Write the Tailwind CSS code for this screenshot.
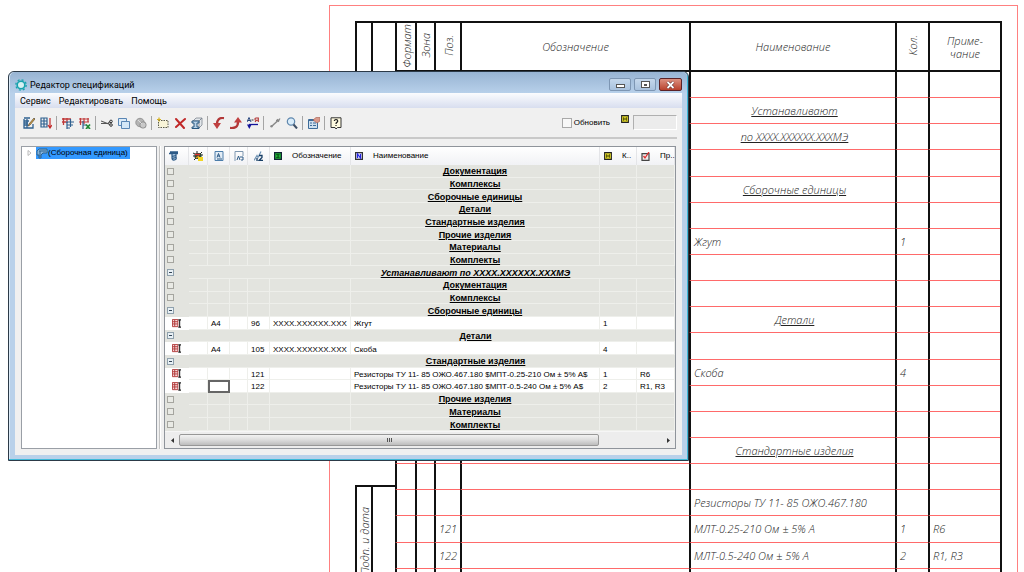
<!DOCTYPE html>
<html lang="ru">
<head>
<meta charset="utf-8">
<title>Редактор спецификаций</title>
<script src="https://cdn.jsdelivr.net/npm/@tailwindcss/browser@4"></script>
</head>
<body class="bg-white">
<svg class="hidden" aria-hidden="true">
  <symbol id="i-edit" viewBox="0 0 12 12"><path d="M1 1h6M1 2v9h9V7M1 4h5M1 6h4M1 8h4M4 2v9" stroke="#2f6190" stroke-width="1.3" fill="none"/><path d="M11 1L6 7l-1 2 2-1 5-6z" fill="#e0a63a" stroke="#333" stroke-width=".6"/></symbol>
  <symbol id="i-sortlist" viewBox="0 0 12 12"><path d="M1 1h6v9H1zM1 4h6M1 7h6M4 1v9" stroke="#2f6190" stroke-width="1.2" fill="none"/><path d="M10 1v9M8 8l2 3 2-3" stroke="#c22a2a" stroke-width="1.2" fill="none"/></symbol>
  <symbol id="i-import" viewBox="0 0 12 12"><path d="M0 2h9M0 5h4M1.500 1v7M5 1v5" stroke="#c03a3a" stroke-width="1.300" fill="none"/><path d="M4 5h8M5 8h6M5 5v7M8.500 2v8M5 11h3" stroke="#2f6190" stroke-width="1.200" fill="none"/></symbol>
  <symbol id="i-excel" viewBox="0 0 12 12"><path d="M0 2h10M0 5h10M1.500 1v7M5 1v6M9 1v4" stroke="#c03a3a" stroke-width="1.200" fill="none"/><path d="M4 4v8M4 8h3" stroke="#2f6190" stroke-width="1.200" fill="none"/><path d="M7 7.500l4 4.500M11 7.500L7 12" stroke="#1f8a35" stroke-width="1.700"/></symbol>
  <symbol id="i-cut" viewBox="0 0 12 12"><path d="M0 4l9 3.500M0 6.500h7l2-2" stroke="#555" stroke-width="1.100" fill="none"/><circle cx="10" cy="4.400" r="1.300" fill="none" stroke="#333"/><circle cx="10" cy="8" r="1.300" fill="none" stroke="#333"/></symbol>
  <symbol id="i-copy" viewBox="0 0 12 12"><path d="M.5 1.500h8v7h-8z" fill="#dcebf8" stroke="#5a86b4"/><path d="M3.500 4.500h8v7h-8z" fill="#d4e7f7" stroke="#5a86b4"/></symbol>
  <symbol id="i-paste" viewBox="0 0 12 12"><circle cx="5" cy="5.500" r="4.200" fill="#b4b4b4" stroke="#979797"/><rect x="5" y="5" width="6" height="6" rx="2.500" fill="#c8c8c8" stroke="#8d8d8d"/><path d="M3 3l4 4" stroke="#ddd"/></symbol>
  <symbol id="i-new" viewBox="0 0 12 12"><path d="M1.500 3.500h9.500v7H1.500z" fill="#f8f4d8" stroke="#5a5a4a" stroke-dasharray="1.500 1"/><path d="M2 .5v4M0 2.500h4" stroke="#d4b020" stroke-width="1.200"/></symbol>
  <symbol id="i-delete" viewBox="0 0 12 12"><path d="M2 2l8 9M11 2L2 10" stroke="#c02828" stroke-width="2" stroke-linecap="round"/></symbol>
  <symbol id="i-part" viewBox="0 0 12 12"><path d="M2 4l3-3h6L8 4zM8 4l3-3v7l-3 3z" fill="#e2e6ea" stroke="#7d8790" stroke-width=".8"/><path d="M1 4h7v2H6v4h2v1.500H1V10h2V6H1z" fill="#b9d3e8" stroke="#27577f"/></symbol>
  <symbol id="i-undo" viewBox="0 0 12 12"><path d="M11 1C6 .5 4 3 4 7" stroke="#b23737" stroke-width="2.300" fill="none"/><path d="M0 6h8l-4 6z" fill="#c04040"/></symbol>
  <symbol id="i-redo" viewBox="0 0 12 12"><path d="M0 11c5 .5 8-1 8-6" stroke="#b23737" stroke-width="2.300" fill="none"/><path d="M4 5.500h8L8 0z" fill="#c04040"/></symbol>
  <symbol id="i-az" viewBox="0 0 12 12"><path d="M0 5l2-4.500L4 5M1 3.500h2" stroke="#27457c" fill="none"/><path d="M4.500 3h2" stroke="#333"/><path d="M11.300 5V1H9a1 1 0 0 0 0 2.200h2M9.500 3.200L8 5" stroke="#b03030" stroke-width="1.100" fill="none"/><path d="M11 7.500H2" stroke="#14149a" stroke-width="1.300"/><path d="M0 7.500h4.600L2.300 12z" fill="#14149a"/></symbol>
  <symbol id="i-link" viewBox="0 0 12 12"><path d="M3 9l5.500-5" stroke="#888" stroke-width="1.500"/><circle cx="2.500" cy="9.300" r="1.200" fill="#888"/><path d="M7 3.500h3.500M8.500 2l1 3M10 3l1-1.500" stroke="#888" stroke-width="1.300" fill="none"/></symbol>
  <symbol id="i-find" viewBox="0 0 12 12"><circle cx="5" cy="4.500" r="3.700" fill="#d9ecfa" stroke="#5f87ad" stroke-width="1.200"/><path d="M7.500 7.500l3.500 4" stroke="#3d4f66" stroke-width="2"/></symbol>
  <symbol id="i-props" viewBox="0 0 12 12"><path d="M.5 2.500h9v9h-9z" fill="#cfe0ef" stroke="#3d6b99"/><path d="M1 3.500h8M2 6h2M5 6h3M2 8.500h2M5 8.500h3" stroke="#3d6b99"/><path d="M5 3l3-2.500h4V4L9 6z" fill="#d99a8c" stroke="#a65b4c" stroke-width=".6"/></symbol>
  <symbol id="i-help" viewBox="0 0 12 12"><path d="M1 .8h10v9.700H7.500L6 12l-1-1.500H1z" fill="#fffbe0" stroke="#333"/><path d="M4.300 4a1.700 1.500 0 1 1 2.500 1.400Q6 5.800 6 7M6 8v1.100" stroke="#222" stroke-width="1.200" fill="none"/></symbol>
  <symbol id="i-tag" viewBox="0 0 9 9"><path d="M.7.7h7.600v7.600H.7z" fill="#e6dc2c" stroke="#222" stroke-width="1.200"/><path d="M3 2.500v4M6 2.500v4M3 4.500h3" stroke="#3a3a00"/></symbol>
  <symbol id="i-screw" viewBox="0 0 10 10"><path d="M0 2.500h9M1 1h8" stroke="#2c5a86" stroke-width="1.500"/><path d="M3 3v4q0 2.500 2.500 2T7 6V3" fill="#9dbcd8" stroke="#2c5a86" stroke-width="1.200"/><path d="M3 5.500l4-1M3 7.500l4-1" stroke="#2c5a86"/></symbol>
  <symbol id="i-bug" viewBox="0 0 10 10"><path d="M0 2l2 1M9 1L7 3M4 0v2M0 5h2M1 9l2-2M10 4H8" stroke="#222"/><rect x="1.500" y="2" width="7" height="6" rx="2" fill="#2d4a38"/><path d="M2 3.500h5" stroke="#d33" stroke-width="1.500"/><path d="M5 6h5v4H5z" fill="#f1d524"/><path d="M3 7l3-2" stroke="#e58b1a" stroke-width="1.500"/></symbol>
  <symbol id="i-format" viewBox="0 0 10 10"><path d="M1 .5h8v9H1z" fill="#e3edf6" stroke="#4c7daa"/><path d="M3 6.500l1.500-4 1.500 4M3.500 5h2M3 8h5" stroke="#2c5a86" fill="none"/></symbol>
  <symbol id="i-zone" viewBox="0 0 10 10"><path d="M1 10V.5h8V5" fill="none" stroke="#7e97b0"/><path d="M3 9l1.500-4L6 9M6 6h3v3H7" stroke="#2c5a86" fill="none"/></symbol>
  <symbol id="i-pos" viewBox="0 0 10 10"><path d="M0 9.500l3-5 1 2 3-6" stroke="#6f93b4" fill="none" stroke-width="1.200"/><path d="M5 4.500h3v2L5 9.500h4M3 7v3" stroke="#173e66" stroke-width="1.300" fill="none"/></symbol>
  <symbol id="i-green" viewBox="0 0 8 8"><path d="M.6.6h6.800v6.800H.6z" fill="#1fae35" stroke="#123" stroke-width="1.200"/><path d="M5.500 2.500h-3L5 4 2.500 5.500h3" stroke="#084a12" stroke-width=".8" fill="none"/></symbol>
  <symbol id="i-name" viewBox="0 0 8 8"><path d="M.6.6h6.800v6.800H.6z" fill="#d8d8ff" stroke="#333" stroke-width="1.200"/><path d="M2.500 6V2l3 4V2" stroke="#2323e0" stroke-width="1.100" fill="none"/></symbol>
  <symbol id="i-note" viewBox="0 0 9 9"><path d="M1 1.600h7v6.800H1z" fill="#eee" stroke="#444" stroke-width="1.200"/><path d="M2.500 4L4 6l4-6" stroke="#e03030" stroke-width="1.300" fill="none"/></symbol>
  <symbol id="i-row" viewBox="0 0 10 10"><path d="M.5.5h6v8h-6zM.5 3h6M.5 5.500h6M3 1v7" fill="#f4d8d8" stroke="#b03434"/><path d="M7 1h3M8.500 1v8M7 9h3" stroke="#222" stroke-width="1.200"/></symbol>
  <symbol id="i-assembly" viewBox="0 0 12 12"><path d="M1 4l2-2h8v4H7L5 8v3H3V8H1z" fill="#86b4da" stroke="#2d628f"/><path d="M3 4h7M4 4v6" stroke="#2d628f"/></symbol>
</svg>

<main class="relative h-screen overflow-hidden">
  <!-- Drawing sheet -->
  <section class="ml-[329px] mr-[6px] pl-[25px] pr-[15px] pt-[15px] mt-[5px] border border-b-0 border-[#ff8080] flex text-[#222] text-[11px] leading-[13px] italic font-['Open_Sans',sans-serif] font-light">
    <div class="w-[40px] shrink-0">
      <div class="h-[400px] border-2 border-r-0 border-[#111] flex"><div class="w-[16px] border-r-2 border-[#111]"></div></div>
      <div class="mt-[64px] h-[160px] border-2 border-r-0 border-[#111] flex">
        <div class="w-[16px] border-r-2 border-[#111] pt-[20px] flex justify-center"><span class="[writing-mode:vertical-rl] rotate-180 h-max whitespace-nowrap">Подп. и дата</span></div>
      </div>
    </div>
    <table class="grow table-fixed border-separate border-spacing-0 h-[574px] border-r-2 border-[#111]">
      <colgroup><col class="w-[20px]"><col class="w-[19px]"><col class="w-[26px]"><col><col class="w-[206px]"><col class="w-[33px]"><col class="w-[72px]"></colgroup>
      <thead>
        <tr class="h-[51px] [&>th]:font-light [&>th]:p-0 [&>th]:border-2 [&>th]:border-r-0 [&>th]:border-[#111]">
          <th><span class="[writing-mode:vertical-rl] rotate-180">Формат</span></th>
          <th><span class="[writing-mode:vertical-rl] rotate-180">Зона</span></th>
          <th><span class="[writing-mode:vertical-rl] rotate-180">Поз.</span></th>
          <th>Обозначение</th><th>Наименование</th>
          <th><span class="[writing-mode:vertical-rl] rotate-180">Кол.</span></th>
          <th>Приме-<br>чание</th>
        </tr>
      </thead>
      <tbody id="sheet"></tbody>
    </table>
  </section>

  <!-- Editor window -->
  <section class="absolute left-[8px] top-[71px] w-[681px] rounded-t-[6px] border border-[#2c3a48] bg-[#b9d1ea] shadow-[inset_-1px_-1px_0_#3fb9d8,inset_1px_1px_0_#dcebf8] px-[6px] pb-[5px] text-[8px] leading-[12px] text-black font-['Liberation_Sans',sans-serif]">
    <header class="-mx-[5px] px-[5px] h-[21px] flex items-center rounded-t-[5px] bg-linear-to-b from-[#98b4d3] to-[#b7d0ea] text-[9px] font-['Roboto',sans-serif]">
      <svg class="size-[12px] mr-[3px] mt-[4px]" viewBox="0 0 12 12"><circle cx="6" cy="6" r="3.800" fill="#d6f0f2" stroke="#17a3ad" stroke-width="1.600"/><circle cx="6" cy="6" r="5.200" fill="none" stroke="#17a3ad" stroke-width="1.300" stroke-dasharray="2 2.080"/></svg>
      <h1 class="grow pt-[4px]">Редактор спецификаций</h1>
      <div class="flex gap-[3px] pt-[4px]">
        <button aria-label="Свернуть" class="w-[22px] h-[13px] border border-[#7d96b3] rounded-[2px] bg-linear-to-b from-[#c5d8ec] to-[#a9c2de] flex items-center justify-center"><span class="w-[9px] h-[4px] mt-[3px] border border-[#555] bg-white"></span></button>
        <button aria-label="Развернуть" class="w-[22px] h-[13px] border border-[#7d96b3] rounded-[2px] bg-linear-to-b from-[#c5d8ec] to-[#a9c2de] flex items-center justify-center"><span class="w-[9px] h-[7px] border border-[#555] bg-white flex items-center justify-center"><span class="w-[3px] h-[2px] bg-[#555]"></span></span></button>
        <button aria-label="Закрыть" class="w-[23px] h-[13px] border border-[#5b2226] rounded-[2px] bg-linear-to-b from-[#dc9080] to-[#b8402c] flex items-center justify-center"><svg class="w-[9px] h-[8px]" viewBox="0 0 9 8"><path d="M1.500 1l6 6M7.500 1l-6 6" stroke="#5a2a2a" stroke-width="3"/><path d="M1.500 1l6 6M7.500 1l-6 6" stroke="#fff" stroke-width="1.800"/></svg></button>
      </div>
    </header>

    <div class="bg-[#f0f0f0] pb-[6px]">
      <nav class="h-[15px] flex items-center gap-[8px] px-[5px] bg-linear-to-b from-[#fbfcfe] to-[#d8deef] text-[9px] font-['Roboto',sans-serif]">
        <button>Сервис</button><button>Редактировать</button><button>Помощь</button>
      </nav>
      <div class="h-[31px] mx-[5px] flex items-center border-b-2 border-[#c9c9c9]" role="toolbar">
        <div class="flex items-center" id="tools"></div>
        <label class="ml-auto flex items-center gap-[2px]"><input type="checkbox" class="appearance-none size-[10px] border border-[#a9a9a9] bg-[#f8f8f8]">Обновить</label>
        <svg class="size-[8px] ml-[11px] mb-[7px]"><use href="#i-tag"/></svg>
        <input aria-label="Количество" disabled class="w-[44px] h-[15px] ml-[4px] border border-r-white border-b-white border-[#b0b0b0] bg-[#ececec]">
      </div>

      <div class="mt-[7px] mx-[6px] flex h-[303px]">
        <aside class="w-[136px] shrink-0 border border-[#9a9fa6] bg-white">
          <div class="flex items-center pl-[5px]">
            <svg class="w-[5px] h-[6px] mr-[4px]" viewBox="0 0 5 6"><path d="M1 .5L4 3 1 5.500z" fill="#fff" stroke="#aaa" stroke-width=".8"/></svg>
            <a href="#" class="flex items-center h-[12px] pr-[2px] bg-[#3399ff] whitespace-nowrap"><svg class="size-[12px]"><use href="#i-assembly"/></svg>(Сборочная единица)</a>
          </div>
        </aside>
        <div class="ml-[2px] mr-[3px] w-[2px] shrink-0 border-l border-[#c4c4c4] bg-white"></div>
        <div class="grow min-w-0 flex flex-col border border-[#8f949b] bg-[#e3e4df]">
          <table class="w-full table-fixed border-separate border-spacing-0 h-[284px]">
            <colgroup><col class="w-[24px]"><col class="w-[19px]"><col class="w-[22px]"><col class="w-[18px]"><col class="w-[22px]"><col class="w-[81px]"><col><col class="w-[37px]"><col class="w-[38px]"></colgroup>
            <thead>
              <tr class="h-[18px] bg-linear-to-b from-white to-[#f1f2f5] [&>th]:font-normal [&>th]:p-0 [&>th]:border-r [&>th]:border-[#e4e5e8] text-black">
                <th><svg class="size-[10px] ml-[4px]"><use href="#i-screw"/></svg></th>
                <th><svg class="size-[10px] mx-auto"><use href="#i-bug"/></svg></th>
                <th><svg class="size-[10px] mx-auto"><use href="#i-format"/></svg></th>
                <th><svg class="size-[10px] mx-auto"><use href="#i-zone"/></svg></th>
                <th><svg class="size-[10px] mx-auto"><use href="#i-pos"/></svg></th>
                <th><span class="flex items-center gap-[10px] pl-[4px]"><svg class="size-[8px] shrink-0"><use href="#i-green"/></svg>Обозначение</span></th>
                <th><span class="flex items-center gap-[10px] pl-[4px]"><svg class="size-[8px] shrink-0"><use href="#i-name"/></svg>Наименование</span></th>
                <th><span class="flex items-center gap-[10px] pl-[4px]"><svg class="size-[8px] shrink-0"><use href="#i-tag"/></svg>К..</span></th>
                <th><span class="flex items-center gap-[10px] pl-[4px]"><svg class="size-[9px] shrink-0"><use href="#i-note"/></svg>Пр..</span></th>
              </tr>
            </thead>
            <tbody id="spec"></tbody>
          </table>
          <div class="grow flex items-center bg-[#ededed] border-t border-[#f6f6f6]">
            <button aria-label="Влево" class="w-[14px] flex justify-center"><svg class="size-[5px]" viewBox="0 0 5 5"><path d="M4 0v5L1 2.500z" fill="#333"/></svg></button>
            <div class="h-[12px] w-[420px] border border-[#979797] rounded-[2px] bg-linear-to-b from-[#f2f2f2] via-[#dcdcdc] to-[#bdbdbd] flex items-center justify-center gap-[1px]"><span class="w-px h-[4px] bg-[#555]"></span><span class="w-px h-[4px] bg-[#555]"></span><span class="w-px h-[4px] bg-[#555]"></span></div>
            <button aria-label="Вправо" class="ml-auto w-[14px] flex justify-center"><svg class="size-[5px]" viewBox="0 0 5 5"><path d="M1 0v5l3-2.500z" fill="#333"/></svg></button>
          </div>
        </div>
      </div>
    </div>
  </section>
</main>

<script>
const svg = (id, cls) => `<svg class="${cls}"><use href="#i-${id}"/></svg>`;

// Toolbar groups
const groups = [
  [['edit', 'Редактировать'], ['sortlist', 'Расставить позиции']],
  [['import', 'Экспорт'], ['excel', 'Экспорт в Excel']],
  [['cut', 'Вырезать'], ['copy', 'Копировать'], ['paste', 'Вставить']],
  [['new', 'Создать'], ['delete', 'Удалить'], ['part', 'Деталь']],
  [['undo', 'Отменить'], ['redo', 'Повторить'], ['az', 'Сортировка']],
  [['link', 'Связь'], ['find', 'Найти']],
  [['props', 'Свойства']],
  [['help', 'Справка']],
];
document.getElementById('tools').innerHTML = groups.map(g =>
  g.map(([id, label]) => `<button aria-label="${label}" class="w-[17px] h-[16px] flex items-center justify-center">${svg(id, 'size-[12px]')}</button>`).join('')
).join('<span class="w-px h-[14px] mx-[2px] bg-[#a5a5a5]"></span>');

// Specification rows: s = section, m = merged section, t = title spanning the row, i = item
const rows = [
  ['s', 'Документация'], ['s', 'Комплексы'], ['s', 'Сборочные единицы'], ['s', 'Детали'],
  ['s', 'Стандартные изделия'], ['s', 'Прочие изделия'], ['s', 'Материалы'], ['s', 'Комплекты'],
  ['t', 'Устанавливают по ХХХХ.ХХХХХХ.ХХХМЭ'],
  ['s', 'Документация'], ['s', 'Комплексы'], ['s', 'Сборочные единицы', 1],
  ['i', 'А4', '96', 'ХХХХ.ХХХХХХ.ХХХ', 'Жгут', '1', ''],
  ['m', 'Детали'],
  ['i', 'А4', '105', 'ХХХХ.ХХХХХХ.ХХХ', 'Скоба', '4', ''],
  ['m', 'Стандартные изделия'],
  ['i', '', '121', '', 'Резисторы ТУ 11- 85 ОЖО.467.180 $МПТ-0.25-210 Ом ± 5% А$', '1', 'R6'],
  ['i', '', '122', '', 'Резисторы ТУ 11- 85 ОЖО.467.180 $МПТ-0.5-240 Ом ± 5% А$', '2', 'R1, R3'],
  ['s', 'Прочие изделия'], ['s', 'Материалы'], ['s', 'Комплекты'],
];
const box = open => open
  ? '<span class="block size-[7px] ml-[2px] border border-[#8fa0ac] bg-[#e8f0f5] pt-[2px] px-[1px]"><span class="block h-px bg-[#345]"></span></span>'
  : '<span class="block size-[7px] ml-[2px] border border-[#a5a59f] bg-[#e9eae5]"></span>';
const grid = 'p-0 border-r border-b border-[#eeefeb]';
document.getElementById('spec').innerHTML = rows.map((r, n) => {
  if (r[0] === 'i') {
    const [, fmt, pos, des, name, qty, note] = r;
    const sel = n === 17 ? 'p-0 border-2 border-[#666]' : 'p-0 pt-[2px] pl-[3px] border-r border-b border-[#eeefeb]';
    const cell = t => `<td class="p-0 pt-[2px] pl-[3px] border-r border-b border-[#eeefeb] whitespace-nowrap">${t}</td>`;
    return `<tr class="bg-white text-black leading-[9px]"><td class="p-0">${svg('row', 'size-[9px] ml-[7px]')}</td>${cell('')}<td class="${sel}">${fmt}</td>${cell('')}${cell(pos)}${cell(des)}${cell(name)}${cell(qty)}${cell(note)}</tr>`;
  }
  const open = r[0] !== 's' || r[2];
  const line = r[0] === 's' ? grid : 'p-0 border-b border-[#eeefeb]';
  const td = `<td class="${line}"></td>`;
  const look = r[0] === 't' ? 'font-bold italic underline' : 'font-bold underline';
  return `<tr class="text-[9px] leading-[9px]"><td class="p-0">${box(open)}</td>${td.repeat(5)}<td class="${line} pt-[2px] text-center whitespace-nowrap ${look}">${r[1]}</td>${td.repeat(2)}</tr>`;
}).join('');

// Sheet rows: [position, name, quantity, note, heading]
const sheet = [
  [], ['', 'Устанавливают', '', '', 1], ['', 'по ХХХХ.ХХХХХХ.ХХХМЭ', '', '', 1], [],
  ['', 'Сборочные единицы', '', '', 1], [], ['', 'Жгут', '1', ''], [], [],
  ['', 'Детали', '', '', 1], [], ['', 'Скоба', '4', ''], [], [],
  ['', 'Стандартные изделия', '', '', 1], [], ['', 'Резисторы ТУ 11- 85 ОЖО.467.180', '', ''],
  ['121', 'МЛТ-0.25-210 Ом ± 5% А', '1', 'R6'], ['122', 'МЛТ-0.5-240 Ом ± 5% А', '2', 'R1, R3'], [],
];
const line = 'p-0 pl-[3px] border-l-2 border-b border-l-[#111] border-b-[#ff6a6a] whitespace-nowrap';
document.getElementById('sheet').innerHTML = sheet.map(([pos = '', name = '', qty = '', note = '', head]) =>
  `<tr class="h-[26px]"><td class="${line}"></td><td class="${line}"></td><td class="${line}">${pos}</td><td class="${line}"></td>` +
  `<td class="${line} ${head ? 'text-center underline' : ''}">${name}</td><td class="${line}">${qty}</td><td class="${line}">${note}</td></tr>`
).join('');
</script>
</body>
</html>
